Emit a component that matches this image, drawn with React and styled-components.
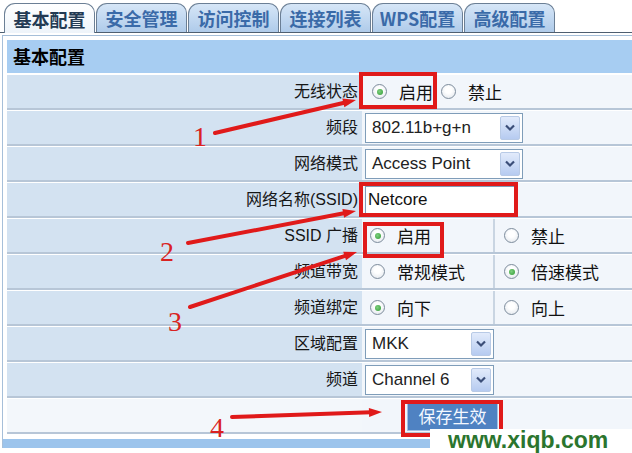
import React from 'react';
import styled, { createGlobalStyle } from 'styled-components';

const Global = createGlobalStyle`
  html, body { margin: 0; padding: 0; background: #fff; }
  body { font-family: "Liberation Sans", "Noto Sans CJK SC", sans-serif; }
`;

const Page = styled.div`
  position: relative;
  width: 632px;
  height: 453px;
  overflow: hidden;
  background: #fff;
`;

const TabBar = styled.div`
  display: flex;
  align-items: flex-end;
  height: 32px;
  padding-left: 4px;
  border-bottom: 1px solid #4f5f70;
`;

const Tab = styled.div`
  position: relative;
  width: 91px;
  height: ${p => (p.$active ? 30 : 29)}px;
  margin-bottom: ${p => (p.$active ? -1 : 0)}px;
  margin-right: 1px;
  box-sizing: border-box;
  border: 1px solid #6b7f95;
  border-bottom: none;
  border-radius: 11px 10px 0 0;
  display: flex;
  align-items: center;
  justify-content: center;
  font-family: "Noto Sans CJK SC", sans-serif;
  font-size: 18px;
  font-weight: 700;
  color: ${p => (p.$active ? '#233a53' : '#3a6aa8')};
  background: ${p =>
    p.$active
      ? 'linear-gradient(#ffffff, #eef4fa)'
      : 'linear-gradient(#d6e6f7, #afcbea)'};
`;

const Panel = styled.div`
  margin: 2px 0 0 2px;
  border-left: 1px solid #a6bfd9;
  border-top: 1px solid #a6bfd9;
  padding: 4px 0 0 4px;
`;

const Header = styled.div`
  height: 33px;
  line-height: 33px;
  background: #a7cdf2;
  padding-left: 6px;
  font-family: "Noto Sans CJK SC", sans-serif;
  font-size: 18px;
  font-weight: 700;
  color: #000;
`;

const Rows = styled.div`
  margin-top: 1px;
`;

const Row = styled.div`
  display: grid;
  grid-template-columns: ${p => (p.$split ? '355px 131px 1fr' : '355px 1fr')};
  height: 36px;
  box-sizing: border-box;
  border-top: 1px solid #fff;
  border-bottom: 2px solid #b7c6d7;
`;

const Label = styled.div`
  background: ${p => (p.$light ? '#f3f7fb' : '#d3e2f1')};
  text-align: right;
  padding-right: 4px;
  line-height: 33px;
  font-size: 16px;
  color: #161616;
  white-space: nowrap;
`;

const Cell = styled.div`
  background: #f2f6fb;
  display: flex;
  align-items: center;
  gap: ${p => p.$gap || 0}px;
  padding-left: ${p => p.$pad || 0}px;
  border-left: ${p => (p.$divider ? '2px solid #c9d5e2' : 'none')};
`;

const Option = styled.span`
  display: inline-flex;
  align-items: center;
  gap: 12px;
  font-family: "Noto Sans CJK SC", sans-serif;
  font-size: 17px;
  color: #111;
`;

const RadioDot = styled.span`
  position: relative;
  flex: none;
  width: 15px;
  height: 15px;
  box-sizing: border-box;
  border-radius: 50%;
  border: 1px solid #7d8c9c;
  background: radial-gradient(circle at 50% 40%, #ffffff 30%, #dde3ea 100%);
  &::after {
    content: '';
    display: ${p => (p.$on ? 'block' : 'none')};
    position: absolute;
    left: 3.5px;
    top: 3.5px;
    width: 6px;
    height: 6px;
    border-radius: 50%;
    background: radial-gradient(circle at 40% 40%, #7fd07f, #2f9a34);
  }
`;

const Select = styled.div`
  width: ${p => p.$w}px;
  height: 30px;
  box-sizing: border-box;
  border: 1px solid #7f9db9;
  background: #fff;
  display: flex;
  align-items: center;
  justify-content: space-between;
  padding: 0 2px 0 6px;
  font-family: "Liberation Sans", sans-serif;
  font-size: 17px;
  color: #222;
`;

const SelectArrow = styled.span`
  width: 20px;
  height: 24px;
  box-sizing: border-box;
  border: 1px solid #b8cae6;
  border-radius: 2px;
  background: linear-gradient(#e2ebfb, #b6cbf0);
  display: flex;
  align-items: center;
  justify-content: center;
`;

const TextInput = styled.input`
  width: 150px;
  height: 28px;
  box-sizing: border-box;
  border: 1px solid #7f9db9;
  background: #fff;
  padding: 0 2px;
  font-family: "Liberation Sans", sans-serif;
  font-size: 17px;
  color: #111;
  outline: none;
`;

const SaveButton = styled.button`
  margin-left: 45px;
  width: 91px;
  height: 31px;
  box-sizing: border-box;
  border: 1px solid #a3c1e4;
  background: #4f82c2;
  color: #f4f8ff;
  font-family: "Noto Sans CJK SC", sans-serif;
  font-size: 17px;
  padding: 0;
`;

const FooterBar = styled.div`
  margin: 5px 0 0 -4px;
  height: 9px;
  background: #9cc4ec;
`;

const Overlay = styled.svg`
  position: absolute;
  left: 0;
  top: 0;
  pointer-events: none;
`;

const Watermark = styled.div`
  position: absolute;
  left: 430px;
  top: 429px;
  width: 202px;
  height: 24px;
  background: #fff;
  padding-left: 18px;
  box-sizing: border-box;
  font-family: "Liberation Sans", sans-serif;
  font-size: 23px;
  font-weight: 700;
  line-height: 22px;
  color: #2b752e;
  white-space: nowrap;
`;

const Chevron = () => (
  <svg width="12" height="8" viewBox="0 0 12 8">
    <path d="M2 1.5 L6 5.5 L10 1.5" fill="none" stroke="#3b4e78" strokeWidth="2.2" />
  </svg>
);

const Dropdown = ({ w, children }) => (
  <Select $w={w}>
    <span>{children}</span>
    <SelectArrow>
      <Chevron />
    </SelectArrow>
  </Select>
);

const Radio = ({ on, children }) => (
  <Option>
    <RadioDot $on={on} />
    {children}
  </Option>
);

const RED = '#e01a1a';

const Arrow = ({ x1, y1, x2, y2 }) => {
  const dx = x2 - x1;
  const dy = y2 - y1;
  const len = Math.hypot(dx, dy);
  const ux = dx / len;
  const uy = dy / len;
  const hl = 13;
  const hw = 4.5;
  const bx = x2 - ux * hl;
  const by = y2 - uy * hl;
  const pts = [
    [x2, y2],
    [bx - uy * hw, by + ux * hw],
    [bx + uy * hw, by - ux * hw],
  ]
    .map(p => p.join(','))
    .join(' ');
  return (
    <g>
      <line x1={x1} y1={y1} x2={bx + ux * 2} y2={by + uy * 2} stroke={RED} strokeWidth="4" strokeLinecap="round" />
      <polygon points={pts} fill={RED} />
    </g>
  );
};

const Num = ({ x, y, children }) => (
  <text x={x} y={y} fill="#d92222" fontFamily="Liberation Serif, serif" fontSize="28">
    {children}
  </text>
);

const tabs = ['基本配置', '安全管理', '访问控制', '连接列表', 'WPS配置', '高级配置'];

export default function App() {
  return (
    <Page>
      <Global />
      <TabBar>
        {tabs.map((t, i) => (
          <Tab key={t} $active={i === 0}>
            {t}
          </Tab>
        ))}
      </TabBar>
      <Panel>
        <Header>基本配置</Header>
        <Rows>
          <Row>
            <Label>无线状态</Label>
            <Cell $pad={10} $gap={8}>
              <Radio on>启用</Radio>
              <Radio>禁止</Radio>
            </Cell>
          </Row>
          <Row>
            <Label>频段</Label>
            <Cell $pad={3}>
              <Dropdown w={158}>802.11b+g+n</Dropdown>
            </Cell>
          </Row>
          <Row>
            <Label>网络模式</Label>
            <Cell $pad={3}>
              <Dropdown w={158}>Access Point</Dropdown>
            </Cell>
          </Row>
          <Row>
            <Label>网络名称(SSID)</Label>
            <Cell $pad={3}>
              <TextInput readOnly value="Netcore" />
            </Cell>
          </Row>
          <Row $split>
            <Label>SSID 广播</Label>
            <Cell $pad={8}>
              <Radio on>启用</Radio>
            </Cell>
            <Cell $pad={9} $divider>
              <Radio>禁止</Radio>
            </Cell>
          </Row>
          <Row $split>
            <Label>频道带宽</Label>
            <Cell $pad={8}>
              <Radio>常规模式</Radio>
            </Cell>
            <Cell $pad={9} $divider>
              <Radio on>倍速模式</Radio>
            </Cell>
          </Row>
          <Row $split>
            <Label>频道绑定</Label>
            <Cell $pad={8}>
              <Radio on>向下</Radio>
            </Cell>
            <Cell $pad={9} $divider>
              <Radio>向上</Radio>
            </Cell>
          </Row>
          <Row>
            <Label>区域配置</Label>
            <Cell $pad={3}>
              <Dropdown w={129}>MKK</Dropdown>
            </Cell>
          </Row>
          <Row>
            <Label>频道</Label>
            <Cell $pad={3}>
              <Dropdown w={129}>Channel 6</Dropdown>
            </Cell>
          </Row>
          <Row>
            <Label $light />
            <Cell>
              <SaveButton>保存生效</SaveButton>
            </Cell>
          </Row>
        </Rows>
        <FooterBar />
      </Panel>

      <Overlay width="632" height="453" viewBox="0 0 632 453">
        <g fill="none" stroke={RED} strokeWidth="4">
          <rect x="361" y="74" width="74" height="33" />
          <rect x="361" y="184" width="155" height="31" />
          <rect x="365" y="224" width="77" height="32" />
          <rect x="403" y="402" width="98" height="33" />
        </g>
        <Arrow x1={215} y1={133} x2={356} y2={100} />
        <Arrow x1={188} y1={243} x2={356} y2={211} />
        <Arrow x1={190} y1={307} x2={357} y2={252} />
        <Arrow x1={232} y1={417} x2={382} y2={412} />
        <Num x={193} y={146}>1</Num>
        <Num x={160} y={261}>2</Num>
        <Num x={168} y={331}>3</Num>
        <Num x={210} y={437}>4</Num>
      </Overlay>
      <Watermark>www.xiqb.com</Watermark>
    </Page>
  );
}
